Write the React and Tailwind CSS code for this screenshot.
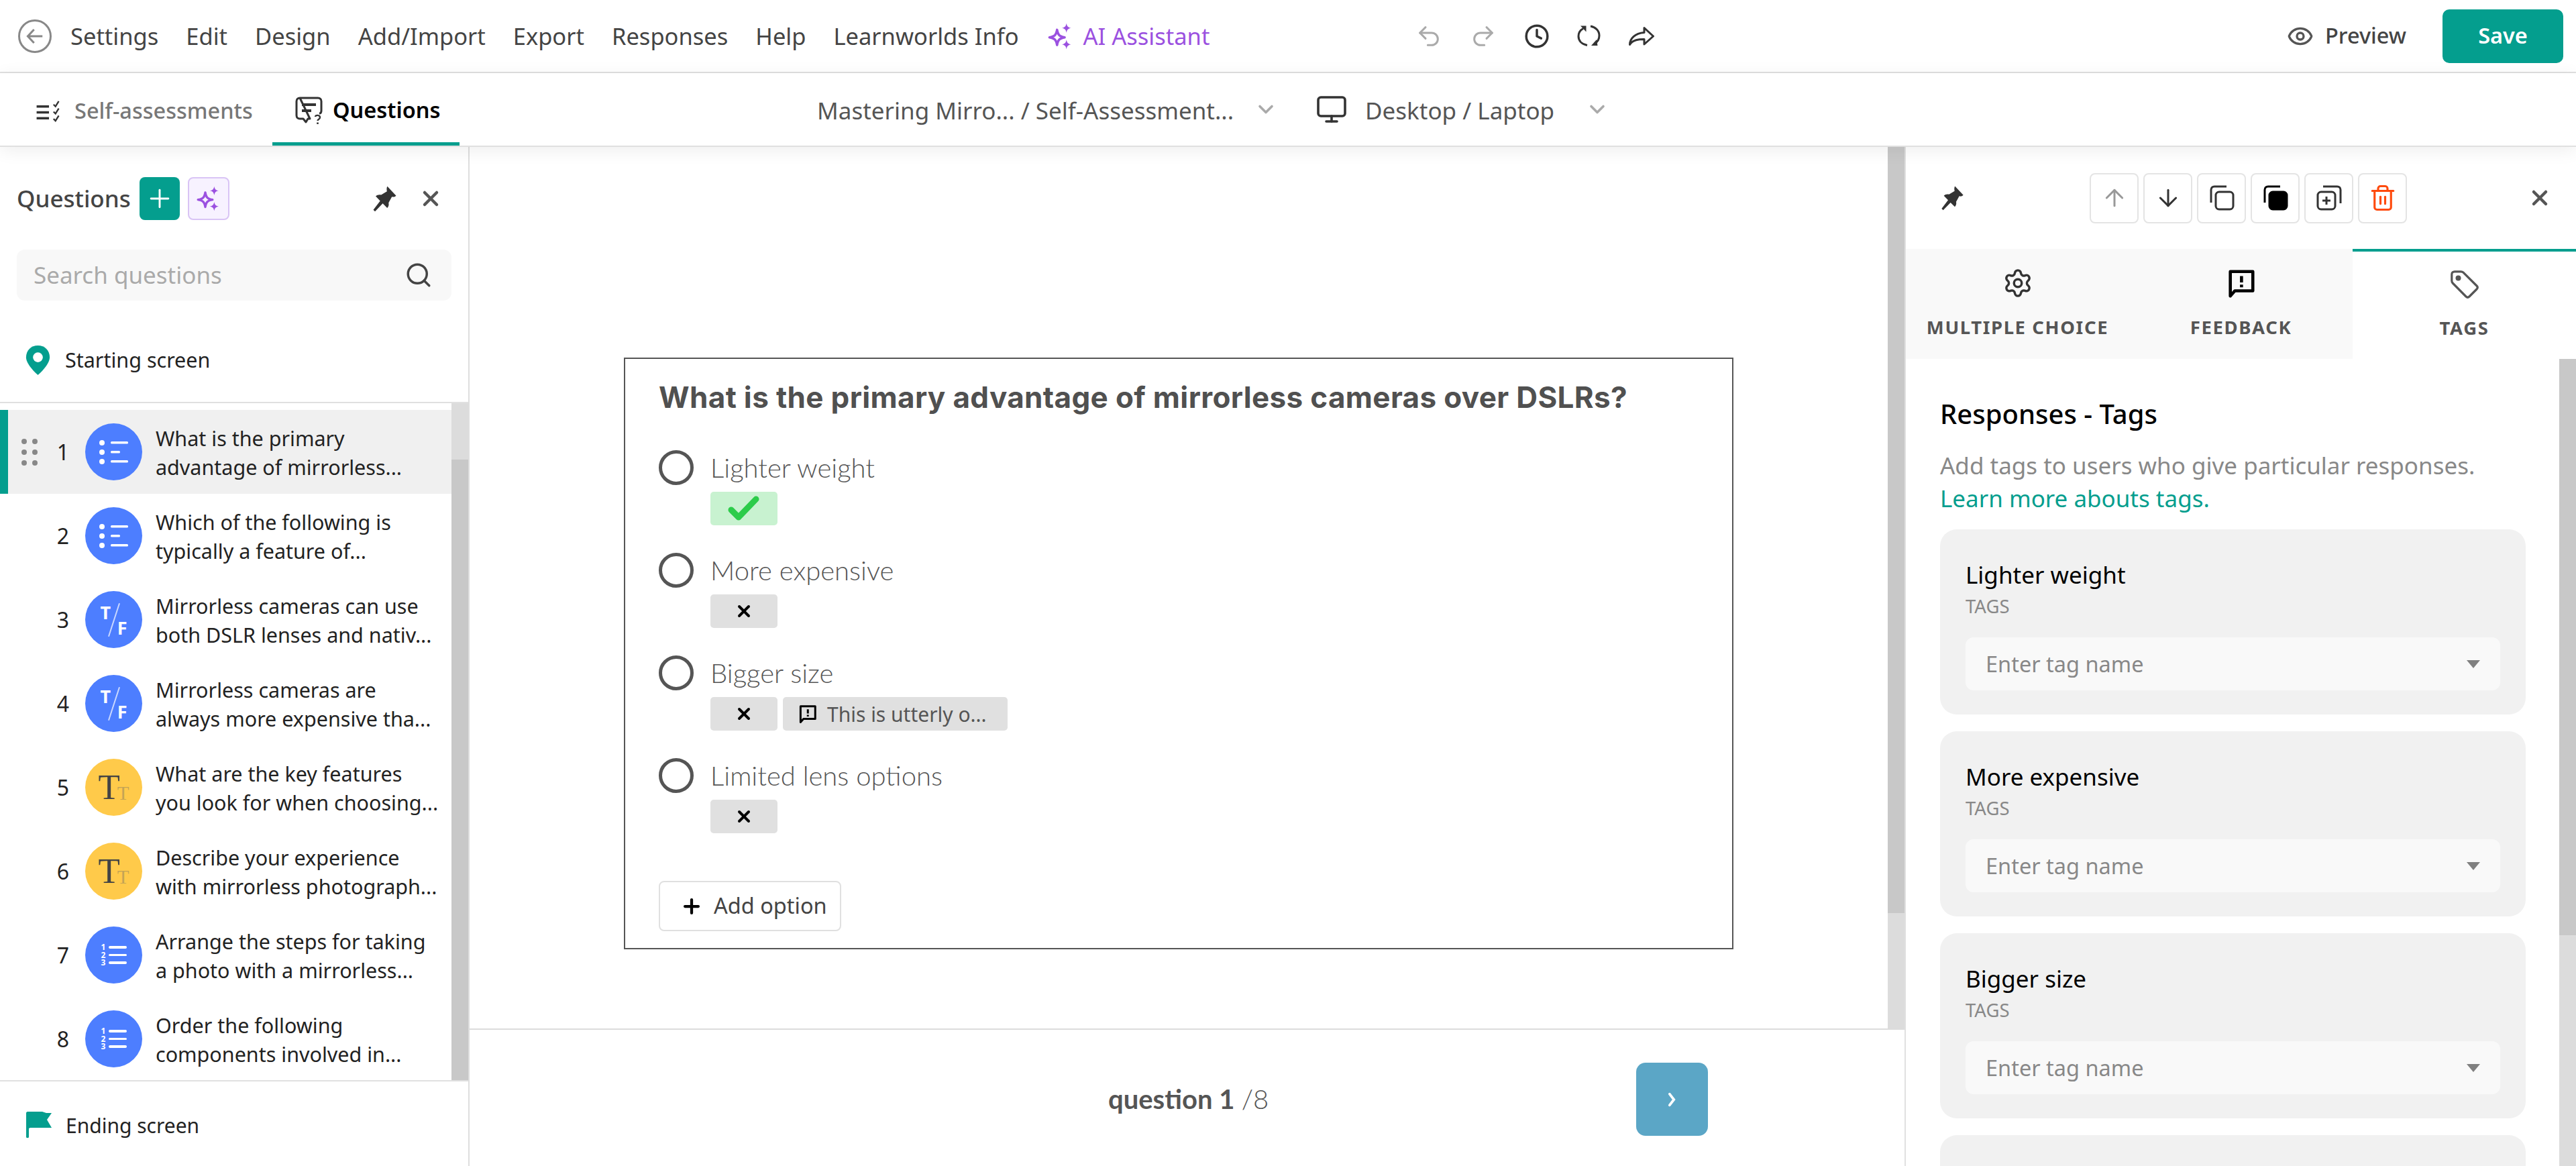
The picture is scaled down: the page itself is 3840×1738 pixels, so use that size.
import { ArrowDown, ArrowUp, ChevronDown, Clock, Eye, Monitor, Plus, Search, Settings, Trash2, Undo2, Redo2, X } from 'lucide-react';

const Sparkles = ({ className }) => (
    <svg viewBox="0 0 24 24" className={className}>
        <path d="M9 6.5C9.8 11 11 12.2 15.5 13C11 13.8 9.8 15 9 19.5C8.2 15 7 13.8 2.5 13C7 12.2 8.2 11 9 6.5Z" fill="none" stroke="currentColor" strokeWidth="2" strokeLinejoin="round" />
        <path d="M17 1C17.5 3.6 18.4 4.5 21 5C18.4 5.5 17.5 6.4 17 9C16.5 6.4 15.6 5.5 13 5C15.6 4.5 16.5 3.6 17 1Z" fill="currentColor" />
        <path d="M17 15C17.5 17.6 18.4 18.5 21 19C18.4 19.5 17.5 20.4 17 23C16.5 20.4 15.6 19.5 13 19C15.6 18.5 16.5 17.6 17 15Z" fill="currentColor" />
    </svg>
);

const PinIcon = ({ className }) => (
    <svg viewBox="0 0 24 24" className={className} fill="#333">
        <path d="M14.5 1.5L22 9.5C21 10.6 19.5 10.8 18.4 10.4L15.6 15.5C16 17.4 15.5 19 14.4 20L10.6 16.2L4 23L2.6 21.6L8.4 14L4.6 10C5.8 8.8 7.4 8.4 9.2 8.8L14.2 5.8C13.9 4.4 13.8 2.8 14.5 1.5Z" />
    </svg>
);

const FeedbackIcon = ({ className }) => (
    <svg viewBox="0 0 24 24" className={className} fill="none" stroke="currentColor" strokeWidth="2.4">
        <path d="M3.5 3H21V18H7L3.5 22V3Z" strokeLinejoin="round" />
        <path d="M12.2 6.5V11.5M12.2 13.2V15.2" />
    </svg>
);

const TagIcon = () => (
    <svg viewBox="0 0 42 42" className="w-[42px] h-[42px]" fill="none" stroke="#555" strokeWidth="3.2">
        <path d="M6 1.8H15.5C17 1.8 18 2.2 19 3.2L39 23C40.5 24.5 40.5 26.5 39 28L28 39C26.5 40.5 24.5 40.5 23 39L3.2 19C2.2 18 1.8 17 1.8 15.5V6C1.8 3.5 3.5 1.8 6 1.8Z" />
        <circle cx="11.5" cy="11.5" r="4" fill="#555" stroke="none" />
    </svg>
);

const ChecklistIcon = () => (
    <svg viewBox="0 0 42 34" className="w-[42px] h-[33px]" fill="none" stroke="#333">
        <path d="M1 10H20M1 19H20M1 28H20" strokeWidth="3.5" />
        <path d="M27 7L30 10L35 2M27 18L30 21L35 13M27 29L30 32L35 24" strokeWidth="2.4" />
    </svg>
);

const QuestionsIcon = () => (
    <svg viewBox="0 0 42 42" className="w-[42px] h-[42px]" fill="none" stroke="#333" strokeWidth="3">
        <path d="M7 2H34C37 2 39 4 39 7V21C39 24 38 25 36 25M22 33H19L16 38L12 33H7C4 33 2 31 2 28V7C2 4 4 2 7 2Z" strokeLinejoin="round" />
        <path d="M10 12H31M10 21H24" strokeWidth="4" />
        <path d="M30 30C30 27 37 27 37 31C37 34 33.5 33.5 33.5 36" strokeWidth="2.4" />
        <path d="M33.5 38.5V41" strokeWidth="2.6" />
    </svg>
);

const MultiIcon = () => (
    <svg viewBox="0 0 44 44" className="w-[44px] h-[44px]" fill="white">
        <circle cx="4" cy="8" r="4" />
        <circle cx="4" cy="22" r="4" />
        <circle cx="4" cy="36" r="4" />
        <rect x="17" y="6" width="26" height="3.5" rx="1.5" />
        <rect x="17" y="20" width="14" height="3.5" rx="1.5" />
        <rect x="17" y="34" width="26" height="3.5" rx="1.5" />
    </svg>
);

const TrueFalseIcon = () => (
    <div className="relative w-[40px] h-[50px] text-white font-bold text-[27px] leading-none">
        <span className="absolute left-0 top-0">T</span>
        <span className="absolute right-0 bottom-0">F</span>
        <span className="absolute left-[19px] top-[-1px] w-[2px] h-[52px] bg-white/70 rotate-[18deg]"></span>
    </div>
);

const TextIcon = () => (
    <div className="relative w-[46px] h-[44px] font-['Liberation_Serif',serif] leading-none">
        <span className="absolute left-0 top-[-5px] text-[53px] text-[#444]">T</span>
        <span className="absolute right-0 bottom-[-1px] text-[29px] text-[#c4a455]">T</span>
    </div>
);

const OrderIcon = () => (
    <div className="flex items-center gap-[5px] w-[38px] text-white">
        <div className="flex flex-col font-bold text-[12px] leading-[11.5px]">
            <span>1</span>
            <span>2</span>
            <span>3</span>
        </div>
        <div className="flex flex-col gap-[8px] flex-1">
            <div className="h-[3.5px] bg-white rounded-sm"></div>
            <div className="h-[3.5px] bg-white rounded-sm"></div>
            <div className="h-[3.5px] bg-white rounded-sm"></div>
        </div>
    </div>
);

const questions = [
    { a: 'What is the primary', b: 'advantage of mirrorless...', kind: 'multi', active: true },
    { a: 'Which of the following is', b: 'typically a feature of...', kind: 'multi' },
    { a: 'Mirrorless cameras can use', b: 'both DSLR lenses and nativ...', kind: 'tf' },
    { a: 'Mirrorless cameras are', b: 'always more expensive tha...', kind: 'tf' },
    { a: 'What are the key features', b: 'you look for when choosing...', kind: 'text' },
    { a: 'Describe your experience', b: 'with mirrorless photograph...', kind: 'text' },
    { a: 'Arrange the steps for taking', b: 'a photo with a mirrorless...', kind: 'order' },
    { a: 'Order the following', b: 'components involved in...', kind: 'order' },
];

const kindIcons = {
    multi: <MultiIcon />,
    tf: <TrueFalseIcon />,
    text: <TextIcon />,
    order: <OrderIcon />,
};

const menu = ['Settings', 'Edit', 'Design', 'Add/Import', 'Export', 'Responses', 'Help', 'Learnworlds Info'];

const QuestionRow = ({ q, index }) => (
    <div className={`flex items-center h-[125px] ${q.active ? 'bg-[#f0f0f0] shadow-[inset_12px_0_0_#049e8e]' : ''}`}>
        <div className="w-[76px] shrink-0 flex justify-end pr-[20px]">
            {q.active && (
                <div className="grid grid-cols-2 gap-x-[8px] gap-y-[8px]">
                    {[0, 1, 2, 3, 4, 5].map((d) => (
                        <span key={d} className="w-[8px] h-[8px] rounded-full bg-[#888]"></span>
                    ))}
                </div>
            )}
        </div>
        <div className="w-[36px] shrink-0 text-center text-[32px] text-[#222]">{index + 1}</div>
        <div className={`ml-[15px] w-[85px] h-[85px] shrink-0 rounded-full flex items-center justify-center ${q.kind === 'text' ? 'bg-[#ffca4a]' : 'bg-[#4d7eff]'}`}>
            {kindIcons[q.kind]}
        </div>
        <div className="ml-[20px] pt-[2px] text-[30.5px] leading-[42.5px] text-[#222] whitespace-nowrap">
            <div>{q.a}</div>
            <div>{q.b}</div>
        </div>
    </div>
);

const LeftPanel = () => (
    <aside className="w-[700px] shrink-0 border-r-[2.5px] border-[#dedede] flex flex-col bg-white">
        <div className="flex items-center h-[64px] mt-[45px] pl-[25px]">
            <span className="text-[35px] font-medium text-[#444] w-[183px]">Questions</span>
            <div className="w-[60px] h-[64px] rounded-lg bg-[#049e8e] flex items-center justify-center">
                <Plus className="text-white w-[44px] h-[44px]" strokeWidth={1.6} />
            </div>
            <div className="ml-[12px] w-[62px] h-[64px] rounded-lg bg-[#f7f2ff] border-[2.5px] border-[#d9c4f5] flex items-center justify-center">
                <Sparkles className="w-[40px] h-[40px] text-[#9b51e0]" />
            </div>
            <PinIcon className="ml-[210px] w-[42px] h-[42px]" />
            <X className="ml-[30px] text-[#555] w-[36px] h-[36px]" strokeWidth={3} />
        </div>
        <div className="mt-[44px] mx-[25px] h-[76px] rounded-xl bg-[#f8f8f8] flex items-center justify-between pl-[25px] pr-[28px]">
            <span className="text-[35px] text-[#aaa]">Search questions</span>
            <Search className="w-[42px] h-[42px] text-[#444]" strokeWidth={2} />
        </div>
        <div className="mt-[66px] h-[46px] pl-[38px] flex items-center gap-[22px] mb-[39px]">
            <svg viewBox="0 0 24 30" className="w-[37px] h-[44px]">
                <path d="M12 0C5 0 0 5 0 12C0 20 12 30 12 30C12 30 24 20 24 12C24 5 19 0 12 0Z" fill="#049e8e" />
                <circle cx="12" cy="12" r="5" fill="white" />
            </svg>
            <span className="text-[30.5px] text-[#222]">Starting screen</span>
        </div>
        <div className="flex-1 flex border-y-[2.5px] border-[#e0e0e0] min-h-0">
            <div className="flex-1 pt-[10px]">
                {questions.map((q, i) => (
                    <QuestionRow key={q.a} q={q} index={i} />
                ))}
            </div>
            <div className="w-[25px] flex flex-col">
                <div className="h-[84px] bg-[#dcdcdc]"></div>
                <div className="flex-1 bg-[#c8c8c8]"></div>
            </div>
        </div>
        <div className="h-[126px] pl-[39px] flex items-center gap-[21px] pt-[4px]">
            <svg viewBox="0 0 38 40" className="w-[38px] h-[40px]" fill="#049e8e">
                <path d="M0 2C0 1 1 0 2 0H24L30 2H38L31 12L38 24H6L4 25V38C4 39.5 0 39.5 0 38V2Z" />
            </svg>
            <span className="text-[30px] text-[#222]">Ending screen</span>
        </div>
    </aside>
);

const Badge = ({ ok }) => (
    <div className={`w-[100px] h-[50px] rounded-[5px] flex items-center justify-center ${ok ? 'bg-[#c8f2d0]' : 'bg-[#e0e0e0]'}`}>
        {ok ? (
            <svg viewBox="0 0 48 38" className="w-[48px] h-[38px]" fill="none" stroke="#2ccc4a" strokeWidth="9" strokeLinecap="round" strokeLinejoin="round">
                <path d="M5 21L16 32L42 5" />
            </svg>
        ) : (
            <X className="w-[28px] h-[28px] text-black" strokeWidth={3.4} />
        )}
    </div>
);

const options = [
    { label: 'Lighter weight', ok: true },
    { label: 'More expensive' },
    { label: 'Bigger size', feedback: true },
    { label: 'Limited lens options' },
];

const QuestionCard = () => (
    <div className="w-[1654px] h-[882px] border-[2.5px] border-[#555] bg-white pl-[50px] pt-[30px]">
        <h1 className="font-['Inter',sans-serif] font-bold text-[44px] leading-[54px] text-[#505050] whitespace-nowrap tracking-[0.35px]">
            What is the primary advantage of mirrorless cameras over DSLRs?
        </h1>
        <div className="mt-[52px] flex flex-col gap-[16px]">
            {options.map((o) => (
                <div key={o.label} className="h-[137px]">
                    <div className="flex items-center h-[52px] gap-[25px]">
                        <span className="w-[52px] h-[52px] rounded-full border-[5px] border-[#555]"></span>
                        <span className="font-['Lato',sans-serif] font-light text-[40px] text-[#555] whitespace-nowrap">{o.label}</span>
                    </div>
                    <div className="ml-[77px] mt-[10px] flex gap-[8px]">
                        <Badge ok={o.ok} />
                        {o.feedback && (
                            <div className="w-[335px] h-[50px] rounded-[5px] bg-[#e0e0e0] flex items-center pl-[22px] gap-[14px]">
                                <FeedbackIcon className="w-[30px] h-[30px] text-black" />
                                <span className="text-[30px] text-[#555]">This is utterly o...</span>
                            </div>
                        )}
                    </div>
                </div>
            ))}
        </div>
        <div className="mt-[46px] w-[272px] h-[75px] rounded-lg border-[2.5px] border-[#e0e0e0] flex items-center pl-[30px] gap-[16px]">
            <Plus className="w-[34px] h-[34px] text-black" strokeWidth={3} />
            <span className="text-[32.5px] text-[#444]">Add option</span>
        </div>
    </div>
);

const Canvas = () => (
    <main className="w-[2141px] shrink-0 flex flex-col bg-white border-r-[2.5px] border-[#e0e0e0]">
        <div className="h-[1314px] flex shrink-0">
            <div className="flex-1 flex justify-center pt-[314px]">
                <QuestionCard />
            </div>
            <div className="w-[25px] shrink-0 flex flex-col">
                <div className="h-[1142px] bg-[#c8c8c8]"></div>
                <div className="flex-1 bg-[#dcdcdc]"></div>
            </div>
        </div>
        <div className="relative flex-1 border-t-[2.5px] border-[#dcdcdc]">
            <div className="absolute left-[952px] top-[78px] whitespace-nowrap font-['Lato',sans-serif] text-[40px] leading-[50px] text-[#555]">
                <span className="font-bold">question 1</span> <span className="font-light">/8</span>
            </div>
            <div className="absolute left-[1739px] top-[49px] w-[107px] h-[109px] rounded-[14px] bg-[#5ba6c6] flex items-center justify-center">
                <svg viewBox="0 0 14 24" className="w-[13px] h-[24px]" fill="none" stroke="white" strokeWidth="4" strokeLinecap="round">
                    <path d="M3 3L10 12L3 21" />
                </svg>
            </div>
        </div>
    </main>
);

const toolButtons = [
    <ArrowUp key="up" className="w-[40px] h-[40px] text-[#999]" strokeWidth={1.8} />,
    <ArrowDown key="down" className="w-[40px] h-[40px] text-[#333]" strokeWidth={1.8} />,
    <svg key="copy" viewBox="0 0 40 40" className="w-[40px] h-[40px]" fill="none" stroke="#333" strokeWidth="3">
        <rect x="11" y="11" width="26" height="26" rx="5" />
        <path d="M4 27V8C4 5 6 3 9 3H27" />
    </svg>,
    <svg key="fill" viewBox="0 0 40 40" className="w-[40px] h-[40px]" fill="none" stroke="#000" strokeWidth="3">
        <rect x="11" y="11" width="26" height="26" rx="5" fill="#000" />
        <path d="M4 27V8C4 5 6 3 9 3H27" />
    </svg>,
    <svg key="add" viewBox="0 0 40 40" className="w-[40px] h-[40px]" fill="none" stroke="#333" strokeWidth="3">
        <rect x="3" y="11" width="26" height="26" rx="5" />
        <path d="M11 3H32C35 3 37 5 37 8V28" />
        <path d="M16 18V30M10 24H22" />
    </svg>,
    <Trash2 key="trash" className="w-[42px] h-[42px] text-[#ff4a0d]" strokeWidth={1.8} />,
];

const tagCards = ['Lighter weight', 'More expensive', 'Bigger size'];

const RightPanel = () => (
    <aside className="flex-1 min-w-0 flex flex-col bg-white">
        <div className="h-[152px] shrink-0 flex items-center pl-[49px]">
            <PinIcon className="w-[40px] h-[40px]" />
            <div className="ml-[185px] flex gap-[7px]">
                {toolButtons.map((icon) => (
                    <div key={icon.key} className="w-[73px] h-[75px] rounded-lg border-[2.5px] border-[#e4e4e4] flex items-center justify-center">
                        {icon}
                    </div>
                ))}
            </div>
            <X className="ml-auto mr-[36px] w-[36px] h-[36px] text-[#555]" strokeWidth={3} />
        </div>
        <div className="h-[164px] shrink-0 flex">
            {[
                { label: 'MULTIPLE CHOICE', icon: <Settings className="w-[46px] h-[46px] text-[#333]" strokeWidth={1.8} /> },
                { label: 'FEEDBACK', icon: <FeedbackIcon className="w-[46px] h-[46px] text-black" /> },
                { label: 'TAGS', icon: <TagIcon />, active: true },
            ].map((t) => (
                <div key={t.label} className={`flex-1 flex flex-col items-center pt-[28px] ${t.active ? 'bg-white border-t-[4px] border-[#049e8e]' : 'bg-[#f9f9f9]'}`}>
                    {t.icon}
                    <span className={`text-[27.5px] font-bold text-[#555] tracking-[1.6px] ${t.active ? 'mt-[23px]' : 'mt-[22px]'}`}>{t.label}</span>
                </div>
            ))}
        </div>
        <div className="flex-1 min-h-0 flex">
            <div className="flex-1 min-w-0 overflow-hidden pl-[51px] pr-[50px] pt-[56px]">
                <h2 className="text-[40px] leading-[52px] font-medium text-black">Responses - Tags</h2>
                <p className="mt-[26px] text-[35px] leading-[49px] text-[#888]">
                    Add tags to users who give particular responses.<br />
                    <span className="text-[#049e8e]">Learn more abouts tags.</span>
                </p>
                <div className="mt-[22px] flex flex-col gap-[25px]">
                    {tagCards.map((name) => (
                        <div key={name} className="h-[276px] shrink-0 rounded-[25px] bg-[#f1f1f1] px-[38px] pt-[45px]">
                            <div className="text-[35px] leading-[46px] text-black">{name}</div>
                            <div className="text-[27.5px] leading-[36px] mt-[6px] text-[#888]">TAGS</div>
                            <div className="mt-[28px] h-[79px] rounded-xl bg-[#f9f9f9] flex items-center justify-between pl-[30px] pr-[30px]">
                                <span className="text-[32.5px] text-[#888] pt-[2px]">Enter tag name</span>
                                <span className="w-0 h-0 border-x-[10px] border-x-transparent border-t-[12px] border-t-[#808080]"></span>
                            </div>
                        </div>
                    ))}
                    {/* fourth card runs past the fold */}
                    <div className="h-[276px] shrink-0 rounded-[25px] bg-[#f1f1f1]"></div>
                </div>
            </div>
            <div className="w-[25px] shrink-0 flex flex-col">
                <div className="h-[859px] bg-[#c8c8c8]"></div>
                <div className="flex-1 bg-[#dcdcdc]"></div>
            </div>
        </div>
    </aside>
);

const App = () => {
    return (
        <div className="w-[3840px] h-[1738px] overflow-hidden flex flex-col bg-white font-['Noto_Sans',sans-serif]">
            {/* Top menu */}
            <header className="h-[109px] shrink-0 flex items-center border-b-[2.5px] border-[#e0e0e0]">
                <div className="w-[2110px] shrink-0 flex items-center pl-[27px]">
                    <div className="w-[50px] h-[50px] rounded-full border-[3px] border-[#888] flex items-center justify-center">
                        <svg viewBox="0 0 24 24" className="w-[30px] h-[30px]" fill="none" stroke="#888" strokeWidth="2.4">
                            <path d="M21 12H4M11 4L3.5 12L11 20" />
                        </svg>
                    </div>
                    <nav className="ml-[28px] flex items-center gap-[41px] text-[34.5px] text-[#444]">
                        {menu.map((m) => (
                            <span key={m}>{m}</span>
                        ))}
                        <span className="flex items-center gap-[13px] text-[#9b51e0]">
                            <Sparkles className="w-[42px] h-[42px]" />
                            AI Assistant
                        </span>
                    </nav>
                </div>
                <div className="w-[1299px] shrink-0 flex items-center gap-[41px]">
                    <Undo2 className="w-[40px] h-[40px] text-[#aaa]" strokeWidth={1.8} />
                    <Redo2 className="w-[40px] h-[40px] text-[#aaa]" strokeWidth={1.8} />
                    <Clock className="w-[38px] h-[38px] text-[#333]" strokeWidth={2.2} />
                    <svg viewBox="0 0 36 36" className="w-[36px] h-[36px]" fill="none" stroke="#333" strokeWidth="3">
                        <path d="M15 31.5C7 30 2 25 2 18C2 13 4.5 9 9 6.5" />
                        <path d="M20 3C28 4.5 33 10 33 17C33 22 30.5 26.5 26 29" />
                        <path d="M5 2.5H13.5V11.5Z" fill="#333" stroke="none" />
                        <path d="M21 32H30.5L29 23Z" fill="#333" stroke="none" />
                    </svg>
                    <svg viewBox="0 0 38 28" className="w-[38px] h-[28px]" fill="none" stroke="#333" strokeWidth="3" strokeLinejoin="round" strokeLinecap="round">
                        <path d="M23 1.5L36.5 14L23 26V18.5C15 18.5 6 19 1.5 26.5C1.5 18 9 9.5 23 8.5V1.5Z" />
                    </svg>
                </div>
                <div className="flex items-center gap-[17px] text-[32.5px] text-[#444]">
                    <Eye className="w-[40px] h-[40px] text-[#555]" strokeWidth={2} />
                    <span className="font-medium w-[175px]">Preview</span>
                </div>
                <div className="w-[180px] h-[80px] rounded-[10px] bg-[#049e8e] text-white text-[32.5px] font-semibold flex items-center justify-center">
                    Save
                </div>
            </header>

            {/* Tabs and breadcrumb */}
            <div className="relative z-10 h-[110px] shrink-0 flex items-center bg-white border-b-[2.5px] border-[#e0e0e0] shadow-[0_5px_25px_rgba(0,0,0,0.07)]">
                <div className="w-[1218px] shrink-0 flex h-full">
                    <div className="w-[406px] flex items-center pl-[53px] gap-[16px] pt-[4px]">
                        <ChecklistIcon />
                        <span className="text-[32.5px] font-medium text-[#777]">Self-assessments</span>
                    </div>
                    <div className="w-[279px] flex items-center pl-[34px] gap-[14px] border-b-[5px] border-[#049e8e] pt-[8px]">
                        <QuestionsIcon />
                        <span className="text-[32.5px] font-semibold text-black">Questions</span>
                    </div>
                </div>
                <span className="text-[35px] text-[#555] w-[651px] shrink-0 pt-[4px]">Mastering Mirro... / Self-Assessment...</span>
                <ChevronDown className="w-[36px] h-[36px] text-[#aaa]" strokeWidth={2.4} />
                <Monitor className="ml-[56px] w-[48px] h-[48px] text-[#333]" strokeWidth={1.8} />
                <span className="ml-[26px] text-[35px] text-[#555] w-[328px] shrink-0 pt-[4px]">Desktop / Laptop</span>
                <ChevronDown className="w-[36px] h-[36px] text-[#aaa]" strokeWidth={2.4} />
            </div>

            <div className="flex-1 min-h-0 flex">
                <LeftPanel />
                <Canvas />
                <RightPanel />
            </div>
        </div>
    );
};

export default App;
